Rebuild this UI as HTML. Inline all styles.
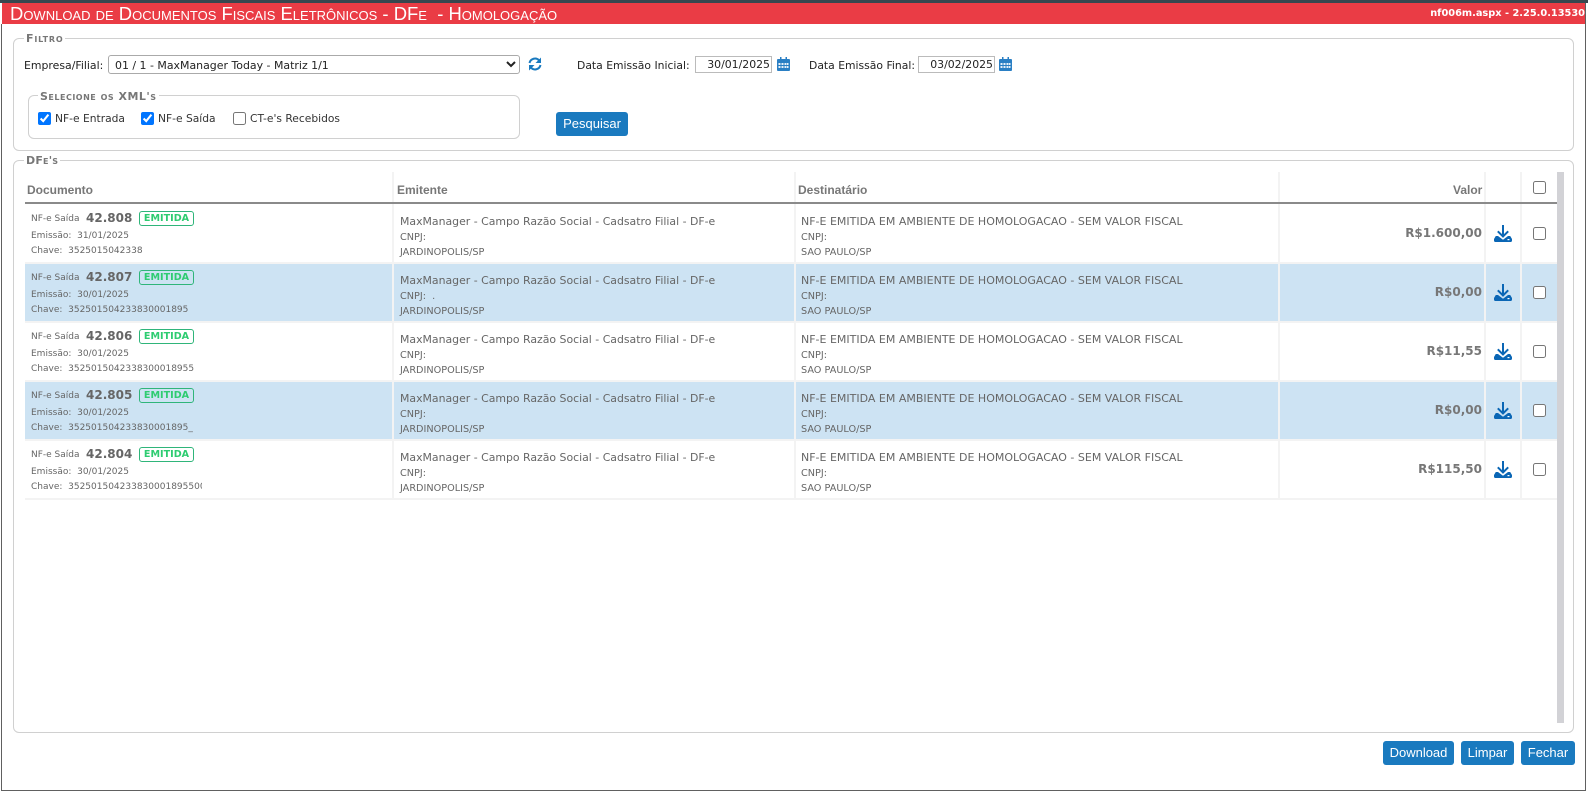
<!DOCTYPE html>
<html lang="pt-BR">
<head>
<meta charset="utf-8">
<title>DFe</title>
<style>
html,body{margin:0;padding:0;width:1588px;height:792px;overflow:hidden;background:#fff;}
body{position:relative;font-family:"DejaVu Sans","Liberation Sans",sans-serif;font-size:10.8px;color:#222;}
.a{position:absolute;white-space:nowrap;}
#top{left:0;top:0;width:1588px;height:3px;background:#37474f;}
#bar{left:2px;top:3px;width:1583px;height:21px;background:#ea3c45;}
#title{left:10px;top:3px;line-height:21px;font-family:"Liberation Sans",sans-serif;font-size:18.45px;font-variant:small-caps;color:#fff;}
#ver{right:3px;top:3px;line-height:21px;font-size:9.8px;font-weight:bold;color:#fff;}
#lb{left:1px;top:24px;width:1px;height:767px;background:#606060;}
#bb{left:1px;top:790px;width:1585px;height:1px;background:#606060;}
#rb{left:1585px;top:3px;width:1px;height:788px;background:#606060;}
.fs{border:1px solid #d0d0d0;border-radius:6px;box-sizing:border-box;}
.lg{background:#fff;padding:0 2px;font-family:"DejaVu Sans",sans-serif;font-weight:bold;font-variant:small-caps;font-size:11px;color:#777;line-height:12px;letter-spacing:.5px;}
select{position:absolute;left:108px;top:55px;width:412px;height:19px;box-sizing:border-box;border:1px solid #aaa;border-radius:3px;background:#fff;font-family:"DejaVu Sans",sans-serif;font-size:10.95px;color:#222;padding:1px 0 0 2px;margin:0;}
.in{height:17px;width:77px;top:56px;box-sizing:border-box;border:1px solid #bbb;background:#fff;text-align:right;line-height:16px;font-size:10.9px;color:#222;padding-right:1px;}
input[type=checkbox]{position:absolute;margin:0;width:13px;height:13px;}
.btn{background:#1a7abf;border-radius:3px;color:#fff;text-align:center;font-family:"Liberation Sans",sans-serif;font-size:13px;line-height:24px;height:24px;top:741px;}
.th{font-family:"Liberation Sans",sans-serif;font-weight:bold;font-size:12px;color:#777;top:183px;line-height:14px;}
.sep{top:172px;width:2px;height:328px;background:#f3f3f3;z-index:3;}
.row{left:25px;width:1532px;height:57px;}
.blue{background:#cde3f3;}
.hl{left:25px;width:1532px;height:2px;background:#f3f3f3;}
.t{color:#666;font-size:9px;line-height:14px;position:absolute;white-space:nowrap;left:6px;}
.t1{top:7px;}.t2{top:24px;}.t3{top:39px;}
.u{color:#666;font-size:9.7px;line-height:14px;position:absolute;white-space:nowrap;}
.c{top:26px;}.j{top:41px;}
.l1{left:375px;}.l2{left:776px;}
.n{color:#666;font-size:12px;font-weight:bold;line-height:16px;position:absolute;left:61px;top:5px;}
.b{position:absolute;left:114px;top:6px;width:55px;height:15px;box-sizing:border-box;border:1px solid #2fb57a;border-radius:3px;color:#2ecc71;font-weight:bold;font-size:9.6px;line-height:13px;text-align:center;}
.em{color:#666;font-size:10.9px;line-height:14px;position:absolute;left:375px;top:10px;white-space:nowrap;}
.de{color:#666;font-size:11px;line-height:14px;position:absolute;left:776px;top:10px;white-space:nowrap;}
.v{color:#777;font-size:12px;font-weight:bold;position:absolute;right:75px;top:20px;line-height:16px;}
.d{position:absolute;left:1469px;top:20px;}
.row input{left:1508px;top:22px;}
</style>
</head>
<body>
<div class="a" id="top"></div>
<div class="a" id="bar"></div>
<div class="a" id="title">Download de Documentos Fiscais Eletrônicos - DFe &nbsp;- Homologação</div>
<div class="a" id="ver">nf006m.aspx - 2.25.0.13530</div>
<div class="a" id="lb"></div><div class="a" id="bb"></div><div class="a" id="rb"></div>

<div class="a fs" style="left:13px;top:38px;width:1561px;height:113px;"></div>
<div class="a lg" style="left:24px;top:33px;letter-spacing:.8px;">Filtro</div>
<div class="a" style="left:24px;top:59px;line-height:14px;font-size:10.9px;">Empresa/Filial:</div>
<select><option>01 / 1 - MaxManager Today - Matriz 1/1</option></select>
<svg class="a" style="left:528px;top:57px;" width="14" height="14" viewBox="0 0 14 14"><g fill="none" stroke="#1a7abf" stroke-width="2"><path d="M1.500 6A5.600 5.600 0 0 1 11.200 3.500"/><path d="M12.500 8A5.600 5.600 0 0 1 2.800 10.500"/></g><path d="M13 0.500V6H7.500Z M1 13.500V8H6.500Z" fill="#1a7abf"/></svg>
<div class="a" style="left:577px;top:59px;line-height:14px;">Data Emissão Inicial:</div>
<div class="a in" style="left:695px;">30/01/2025</div>
<svg class="a" style="left:777px;top:57px;" width="13" height="14" viewBox="0 0 13 14"><path d="M1 2h11a1 1 0 0 1 1 1v10a1 1 0 0 1-1 1H1a1 1 0 0 1-1-1V3a1 1 0 0 1 1-1z" fill="#2a7fc4"/><path d="M3 0h1.500v3H3zM8.500 0H10v3H8.500z" fill="#2a7fc4"/><path d="M1.500 6h2v2h-2zM4.500 6h2v2h-2zM7.500 6h2v2h-2zM10 6h1.500v2H10zM1.500 9h2v2h-2zM4.500 9h2v2h-2zM7.500 9h2v2h-2zM10 9h1.500v2H10z" fill="#e8f1f9"/></svg>
<div class="a" style="left:809px;top:59px;line-height:14px;">Data Emissão Final:</div>
<div class="a in" style="left:918px;">03/02/2025</div>
<svg class="a" style="left:999px;top:57px;" width="13" height="14" viewBox="0 0 13 14"><path d="M1 2h11a1 1 0 0 1 1 1v10a1 1 0 0 1-1 1H1a1 1 0 0 1-1-1V3a1 1 0 0 1 1-1z" fill="#2a7fc4"/><path d="M3 0h1.500v3H3zM8.500 0H10v3H8.500z" fill="#2a7fc4"/><path d="M1.500 6h2v2h-2zM4.500 6h2v2h-2zM7.500 6h2v2h-2zM10 6h1.500v2H10zM1.500 9h2v2h-2zM4.500 9h2v2h-2zM7.500 9h2v2h-2zM10 9h1.500v2H10z" fill="#e8f1f9"/></svg>

<div class="a fs" style="left:28px;top:95px;width:492px;height:44px;"></div>
<div class="a lg" style="left:38px;top:91px;">Selecione os XML's</div>
<input type="checkbox" checked style="left:38px;top:112px;">
<div class="a" style="left:55px;top:112px;line-height:14px;color:#333;font-size:10.7px;">NF-e Entrada</div>
<input type="checkbox" checked style="left:141px;top:112px;">
<div class="a" style="left:158px;top:112px;line-height:14px;color:#333;font-size:10.7px;">NF-e Saída</div>
<input type="checkbox" style="left:233px;top:112px;">
<div class="a" style="left:250px;top:112px;line-height:14px;color:#333;font-size:10.7px;">CT-e's Recebidos</div>
<div class="a btn" style="left:556px;top:112px;width:72px;">Pesquisar</div>

<div class="a fs" style="left:13px;top:160px;width:1561px;height:573px;"></div>
<div class="a lg" style="left:24px;top:155px;letter-spacing:.2px;">DFe's</div>
<div class="a" style="left:1557px;top:172px;width:7px;height:551px;background:#d2d2d6;"></div>

<div class="a th" style="left:27px;">Documento</div>
<div class="a th" style="left:397px;">Emitente</div>
<div class="a th" style="left:798px;">Destinatário</div>
<div class="a th" style="left:1453px;">Valor</div>
<input type="checkbox" style="left:1533px;top:181px;">

<div class="a sep" style="left:392px;"></div>
<div class="a sep" style="left:794px;"></div>
<div class="a sep" style="left:1278px;"></div>
<div class="a sep" style="left:1484px;"></div>
<div class="a sep" style="left:1520px;"></div>
<div class="a" style="left:25px;top:202px;width:1532px;height:2px;background:#8a8a8a;z-index:4;"></div>

<div class="a row" style="top:205px;">
<span class="t t1">NF-e Saída</span><span class="n">42.808</span><span class="b">EMITIDA</span>
<span class="t t2">Emissão:&nbsp; 31/01/2025</span>
<span class="t t3">Chave:&nbsp; 3525015042338</span>
<span class="em">MaxManager - Campo Razão Social - Cadsatro Filial - DF-e</span>
<span class="u c l1">CNPJ:</span><span class="u j l1">JARDINOPOLIS/SP</span>
<span class="de">NF-E EMITIDA EM AMBIENTE DE HOMOLOGACAO - SEM VALOR FISCAL</span>
<span class="u c l2">CNPJ:</span><span class="u j l2">SAO PAULO/SP</span>
<span class="v">R$1.600,00</span>
<svg class="d" width="18" height="17" viewBox="0 0 18 17"><path d="M9 0v11.500M3.800 6.300l5.200 5.200 5.200-5.200" fill="none" stroke="#0a66b5" stroke-width="2"/><path d="M1.800 11H4l5 3.800L14 11h2.200L18 14v1.800a1.200 1.200 0 0 1-1.200 1.200H1.200A1.200 1.200 0 0 1 0 15.800V14z" fill="#0a66b5"/><rect x="13.500" y="14" width="2" height="1.200" fill="#fff"/></svg>
<input type="checkbox">
</div>
<div class="a hl" style="top:262px;"></div>

<div class="a row blue" style="top:264px;">
<span class="t t1">NF-e Saída</span><span class="n">42.807</span><span class="b">EMITIDA</span>
<span class="t t2">Emissão:&nbsp; 30/01/2025</span>
<span class="t t3">Chave:&nbsp; 352501504233830001895</span>
<span class="em">MaxManager - Campo Razão Social - Cadsatro Filial - DF-e</span>
<span class="u c l1">CNPJ:&nbsp; .</span><span class="u j l1">JARDINOPOLIS/SP</span>
<span class="de">NF-E EMITIDA EM AMBIENTE DE HOMOLOGACAO - SEM VALOR FISCAL</span>
<span class="u c l2">CNPJ:</span><span class="u j l2">SAO PAULO/SP</span>
<span class="v">R$0,00</span>
<svg class="d" width="18" height="17" viewBox="0 0 18 17"><path d="M9 0v11.500M3.800 6.300l5.200 5.200 5.200-5.200" fill="none" stroke="#0a66b5" stroke-width="2"/><path d="M1.800 11H4l5 3.800L14 11h2.200L18 14v1.800a1.200 1.200 0 0 1-1.200 1.200H1.200A1.200 1.200 0 0 1 0 15.800V14z" fill="#0a66b5"/><rect x="13.500" y="14" width="2" height="1.200" fill="#fff"/></svg>
<input type="checkbox">
</div>
<div class="a hl" style="top:321px;"></div>

<div class="a row" style="top:323px;">
<span class="t t1">NF-e Saída</span><span class="n">42.806</span><span class="b">EMITIDA</span>
<span class="t t2">Emissão:&nbsp; 30/01/2025</span>
<span class="t t3">Chave:&nbsp; 3525015042338300018955</span>
<span class="em">MaxManager - Campo Razão Social - Cadsatro Filial - DF-e</span>
<span class="u c l1">CNPJ:</span><span class="u j l1">JARDINOPOLIS/SP</span>
<span class="de">NF-E EMITIDA EM AMBIENTE DE HOMOLOGACAO - SEM VALOR FISCAL</span>
<span class="u c l2">CNPJ:</span><span class="u j l2">SAO PAULO/SP</span>
<span class="v">R$11,55</span>
<svg class="d" width="18" height="17" viewBox="0 0 18 17"><path d="M9 0v11.500M3.800 6.300l5.200 5.200 5.200-5.200" fill="none" stroke="#0a66b5" stroke-width="2"/><path d="M1.800 11H4l5 3.800L14 11h2.200L18 14v1.800a1.200 1.200 0 0 1-1.200 1.200H1.200A1.200 1.200 0 0 1 0 15.800V14z" fill="#0a66b5"/><rect x="13.500" y="14" width="2" height="1.200" fill="#fff"/></svg>
<input type="checkbox">
</div>
<div class="a hl" style="top:380px;"></div>

<div class="a row blue" style="top:382px;">
<span class="t t1">NF-e Saída</span><span class="n">42.805</span><span class="b">EMITIDA</span>
<span class="t t2">Emissão:&nbsp; 30/01/2025</span>
<span class="t t3">Chave:&nbsp; 352501504233830001895_</span>
<span class="em">MaxManager - Campo Razão Social - Cadsatro Filial - DF-e</span>
<span class="u c l1">CNPJ:</span><span class="u j l1">JARDINOPOLIS/SP</span>
<span class="de">NF-E EMITIDA EM AMBIENTE DE HOMOLOGACAO - SEM VALOR FISCAL</span>
<span class="u c l2">CNPJ:</span><span class="u j l2">SAO PAULO/SP</span>
<span class="v">R$0,00</span>
<svg class="d" width="18" height="17" viewBox="0 0 18 17"><path d="M9 0v11.500M3.800 6.300l5.200 5.200 5.200-5.200" fill="none" stroke="#0a66b5" stroke-width="2"/><path d="M1.800 11H4l5 3.800L14 11h2.200L18 14v1.800a1.200 1.200 0 0 1-1.200 1.200H1.200A1.200 1.200 0 0 1 0 15.800V14z" fill="#0a66b5"/><rect x="13.500" y="14" width="2" height="1.200" fill="#fff"/></svg>
<input type="checkbox">
</div>
<div class="a hl" style="top:439px;"></div>

<div class="a row" style="top:441px;">
<span class="t t1">NF-e Saída</span><span class="n">42.804</span><span class="b">EMITIDA</span>
<span class="t t2">Emissão:&nbsp; 30/01/2025</span>
<span class="t t3" style="width:171px;overflow:hidden;">Chave:&nbsp; 352501504233830001895500</span>
<span class="em">MaxManager - Campo Razão Social - Cadsatro Filial - DF-e</span>
<span class="u c l1">CNPJ:</span><span class="u j l1">JARDINOPOLIS/SP</span>
<span class="de">NF-E EMITIDA EM AMBIENTE DE HOMOLOGACAO - SEM VALOR FISCAL</span>
<span class="u c l2">CNPJ:</span><span class="u j l2">SAO PAULO/SP</span>
<span class="v">R$115,50</span>
<svg class="d" width="18" height="17" viewBox="0 0 18 17"><path d="M9 0v11.500M3.800 6.300l5.200 5.200 5.200-5.200" fill="none" stroke="#0a66b5" stroke-width="2"/><path d="M1.800 11H4l5 3.800L14 11h2.200L18 14v1.800a1.200 1.200 0 0 1-1.200 1.200H1.200A1.200 1.200 0 0 1 0 15.800V14z" fill="#0a66b5"/><rect x="13.500" y="14" width="2" height="1.200" fill="#fff"/></svg>
<input type="checkbox">
</div>
<div class="a hl" style="top:498px;"></div>

<div class="a btn" style="left:1383px;width:71px;">Download</div>
<div class="a btn" style="left:1461px;width:53px;">Limpar</div>
<div class="a btn" style="left:1521px;width:54px;">Fechar</div>
</body>
</html>
